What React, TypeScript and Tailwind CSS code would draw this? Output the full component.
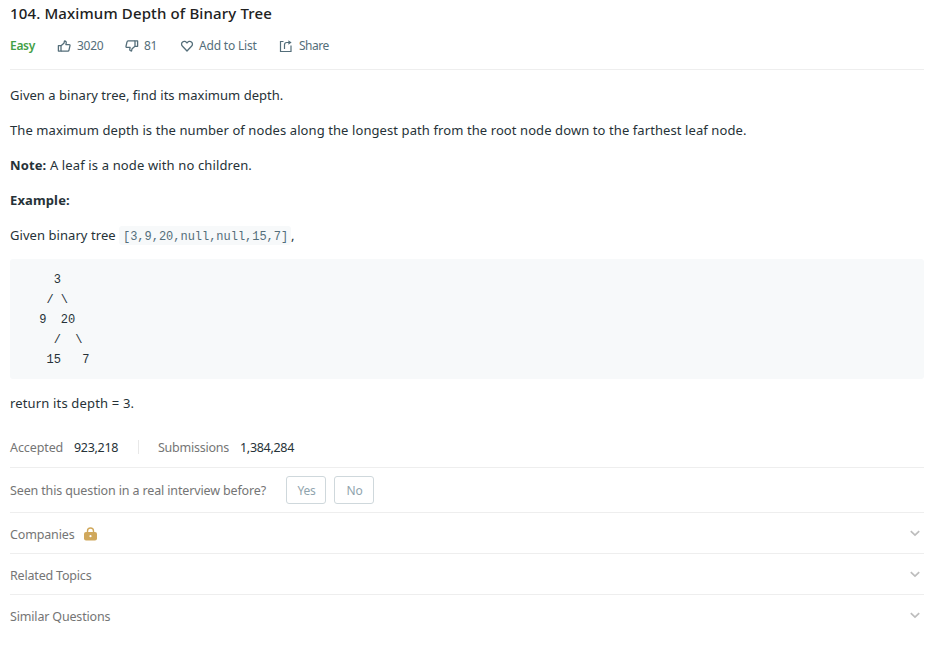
import React from "react";

function ThumbUp({ className = "" }: { className?: string }) {
  return (
    <svg className={className} width="14" height="14" viewBox="0 0 14 14" fill="none" stroke="#546e7a" strokeWidth="1.3" strokeLinejoin="round">
      <path d="M1.400 6.700h2.600v5.400H1.400z" />
      <path d="M4 6.700 6.900 4.300 7.500 2c1.500 0 1.900.8 1.700 1.900L8.900 5.600h3.300c.6 0 .9.500.8 1l-1 4.500c-.1.600-.5 1-1.100 1H4" />
    </svg>
  );
}

function Heart() {
  return (
    <svg width="14" height="14" viewBox="0 0 14 14" fill="none" stroke="#546e7a" strokeWidth="1.3" strokeLinejoin="round">
      <path d="M7 12 2.500 7.300C1.100 5.800 1.300 3.900 2.600 2.900 4.100 1.800 6 2.400 7 4 8 2.400 9.900 1.800 11.400 2.900 12.700 3.900 12.900 5.800 11.500 7.300z" />
    </svg>
  );
}

function ShareIcon() {
  return (
    <svg width="14" height="14" viewBox="0 0 14 14" fill="none" stroke="#546e7a" strokeWidth="1.2">
      <path d="M4.500 2.500H1.500v10h10.500V6.500" />
      <path d="M5.500 10V5.800c0-1.500.7-2.300 2.200-2.300H10" />
      <path d="M9.400 1.300v4.400L12.600 3.500z" fill="#546e7a" stroke="none" />
    </svg>
  );
}

function Lock() {
  return (
    <svg className="-mt-[3px] ml-[9px]" width="13" height="14" viewBox="0 0 13 14">
      <path d="M3.500 6V4a3 3 0 0 1 6 0v2" fill="none" stroke="#d0a85c" strokeWidth="1.400" />
      <rect x="0" y="5" width="13" height="8.500" rx="2" fill="#d0a85c" />
      <circle cx="6.500" cy="9.200" r="1.100" fill="#fff" />
    </svg>
  );
}

function Row({ label, tracking, children }: { label: string; tracking: string; children?: React.ReactNode }) {
  return (
    <div className="flex h-[41px] items-center border-t border-[#eeeeee] pt-[4px] text-[12.5px] text-[#757575]">
      <span className={tracking}>{label}</span>
      {children}
      <svg className="mr-[4px] -mt-[4px] ml-auto" width="10" height="7" viewBox="0 0 10 7" fill="none" stroke="#bdbdbd" strokeWidth="1.700">
        <path d="M.8 1.200 5 5.200 9.200 1.200" />
      </svg>
    </div>
  );
}

const tree = `      3
     / \\
    9  20
      /  \\
     15   7`;

export default function App() {
  return (
    <div className="h-[664px] w-[939px] overflow-hidden bg-white pr-[15px] pl-[10px] font-['Noto_Sans','Open_Sans',sans-serif] text-[13px] text-[#263238]">
      <h1 className="h-[28px] text-[15px] leading-[27px] font-medium tracking-[0.14px] whitespace-nowrap text-[#212121]">
        104. Maximum Depth of Binary Tree
      </h1>
      <div className="flex h-[42px] items-start border-b border-[#eeeeee] pt-[8px] text-[12px] leading-[20px] whitespace-nowrap text-[#546e7a]">
        <span className="w-[47px] font-semibold tracking-[-0.3px] text-[#43a047]">Easy</span>
        <div className="flex w-[68px] items-center gap-[6px]"><ThumbUp /><span className="tracking-[-0.3px]">3020</span></div>
        <div className="flex w-[55px] items-center gap-[5px]"><ThumbUp className="rotate-180" /><span className="tracking-[-0.3px]">81</span></div>
        <div className="flex w-[99px] items-center gap-[5px]"><Heart /><span className="tracking-[-0.18px]">Add to List</span></div>
        <div className="flex items-center gap-[6px]"><ShareIcon /><span className="tracking-[-0.5px]">Share</span></div>
      </div>
      <div className="flex flex-col gap-[14px] pt-[15px] leading-[21px] whitespace-nowrap">
        <p className="tracking-[0.03px]">Given a binary tree, find its maximum depth.</p>
        <p className="tracking-[0.09px]">The maximum depth is the number of nodes along the longest path from the root node down to the farthest leaf node.</p>
        <p className="tracking-[0.13px]"><b>Note:</b> A leaf is a node with no children.</p>
        <p className="tracking-[0.13px]"><b>Example:</b></p>
        <p className="flex items-center">
          <span className="w-[109px] tracking-[0.06px]">Given binary tree</span>
          <code className="h-[19px] w-[172px] rounded-[3px] bg-[#f7f9fa] pt-px pl-[4px] font-['Liberation_Mono',monospace] text-[12px] leading-[20px] tracking-[-0.02px] text-[#546e7a]">[3,9,20,null,null,15,7]</code>
          <span>,</span>
        </p>
      </div>
      <pre className="mt-[13px] h-[120px] rounded-[3px] bg-[#f7f9fa] pt-[11px] pl-[0.7px] font-['Liberation_Mono',monospace] text-[12px] leading-[20px] tracking-[-0.04px]">{tree}</pre>
      <p className="mt-[14px] leading-[21px] tracking-[0.16px]">return its depth = 3.</p>
      <div className="mt-[18px] flex h-[35px] text-[12.5px] leading-[32px] whitespace-nowrap">
        <span className="w-[64px] tracking-[-0.1px] text-[#757575]">Accepted</span>
        <span className="w-[64px] tracking-[-0.3px]">923,218</span>
        <span className="mt-[8px] h-[14px] w-[20px] border-l border-[#e8e8e8]" />
        <span className="w-[82px] tracking-[-0.25px] text-[#757575]">Submissions</span>
        <span className="tracking-[-0.3px]">1,384,284</span>
      </div>
      <div className="flex h-[45px] items-center border-t border-[#eeeeee] text-[12.5px] whitespace-nowrap text-[#757575]">
        <span className="w-[276px] pt-[2px] tracking-[-0.14px]">Seen this question in a real interview before?</span>
        <button className="mr-[8px] h-[28px] w-[40px] rounded-[3px] border border-[#cfd8dc] pt-[2px] pl-[1px] text-[12px] tracking-[-0.2px] text-[#90a4ae]">Yes</button>
        <button className="h-[28px] w-[40px] rounded-[3px] border border-[#cfd8dc] pt-[2px] pl-[1px] text-[12px] tracking-[-0.2px] text-[#90a4ae]">No</button>
      </div>
      <Row label="Companies" tracking="tracking-[-0.15px]"><Lock /></Row>
      <Row label="Related Topics" tracking="tracking-[-0.19px]" />
      <Row label="Similar Questions" tracking="tracking-[-0.17px]" />
    </div>
  );
}
